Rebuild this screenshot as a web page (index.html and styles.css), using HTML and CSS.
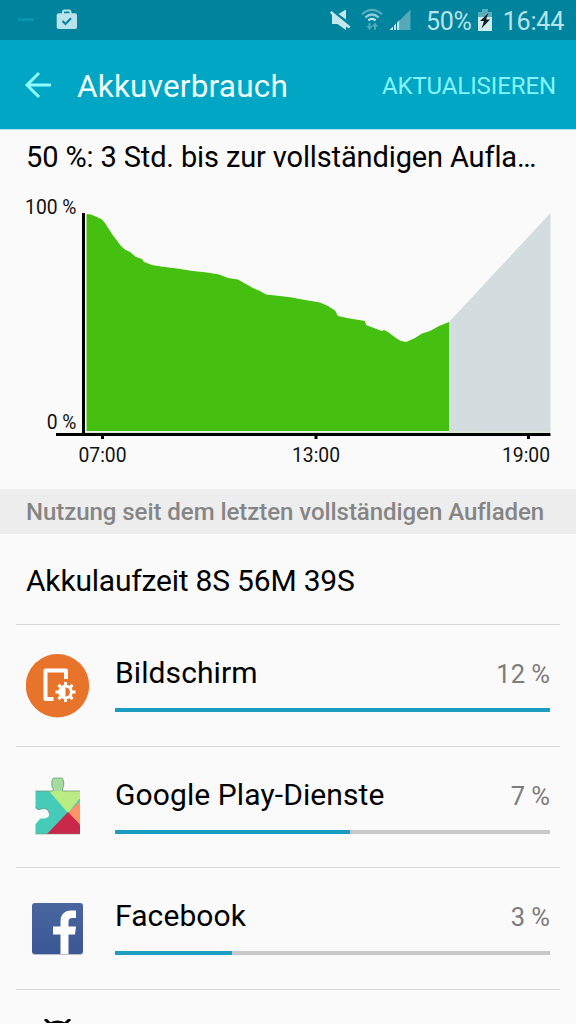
FILE: index.html
```html
<!DOCTYPE html>
<html lang="de">
<head>
    <meta charset="UTF-8">
    <meta name="viewport" content="width=device-width, initial-scale=1.0">
    <title>Akkuverbrauch</title>
    <link rel="stylesheet" href="styles.css">
</head>
<body>
    <!-- Statusleiste -->
    <div class="statusbar">
        <svg class="status-left" width="90" height="40" viewBox="0 0 90 40">
            <path d="M18 19.500h16" stroke="#0a9bb8" stroke-width="2"/>
            <path d="M63 14v-2q0-1.500 1.500-1.500h4.500q1.500 0 1.500 1.500v2" fill="none" stroke="#b9e3ea" stroke-width="2"/>
            <rect x="56.700" y="13.300" width="20.300" height="15.700" rx="2" fill="#b9e3ea"/>
            <path d="M62.500 21l3 3 5.500-5.700" fill="none" stroke="#00839c" stroke-width="2"/>
        </svg>
        <svg class="status-icons" width="86" height="40" viewBox="328 0 86 40">
            <!-- stumm -->
            <path d="M346 9.500V19.500L338.500 14z" fill="#c4e8ee"/>
            <path d="M330 12.500L331.500 11 350.500 26.500 349 28.500 346 26.500V30L337.500 24H332V15z" fill="#c4e8ee"/>
            <!-- WLAN -->
            <g fill="none" stroke-width="2.200">
                <path d="M362 14.300q10-9 20 0" stroke="#58adbd"/>
                <path d="M365.200 17.500q6.800-6 13.600 0" stroke="#8fcbd6"/>
                <path d="M368.300 20.300q3.700-3 7.400 0" stroke="#c4e8ee"/>
            </g>
            <path d="M369.500 30l-3.300-4h2.300v-3h2v3h2.300zM375 22.500l3.300 4h-2.300v3.200h-2v-3.200h-2.300z" fill="#4fa9ba"/>
            <!-- Signal -->
            <path d="M400 30V20l10.500-10.500V30z" fill="#55a9b9"/>
            <path d="M389.500 30l3.500-3.500V30zM394 30v-4.500l2-2V30zM397 30v-7.500l2.500-2.500v10z" fill="#c4e8ee"/>
        </svg>
        <span class="status-percent">50%</span>
        <svg class="status-battery" width="16" height="24" viewBox="0 0 16 24">
            <path d="M5 1h6v3h4v5H1V4h4z" fill="#5aadbc"/>
            <path d="M1 9h14v14H1z" fill="#d0edf2"/>
            <path d="M11.500 5L3 13h4l-2.500 7.500L13 11.500H9z" fill="#0c1c20"/>
        </svg>
        <span class="status-time">16:44</span>
    </div>

    <header class="header">
        <svg class="back" width="28" height="28" viewBox="0 0 28 28">
            <path d="M15 2L3 14l12 12M3 14h24" fill="none" stroke="#8ffcff" stroke-width="3"/>
        </svg>
        <h1 class="title">Akkuverbrauch</h1>
        <span class="refresh">AKTUALISIEREN</span>
    </header>

    <main>
        <p class="estimate">50 %: 3 Std. bis zur vollständigen Aufla…</p>

        <!-- Akkuverlauf -->
        <svg class="chart" width="576" height="306" viewBox="0 183 576 306">
            <path d="M449 322L550.500 213V432H449z" fill="#d3dcde"/>
            <path d="M84 432.500H550" stroke="#d5e9cc" stroke-width="2"/>
            <path class="level" d="M86.500 214L91 214.500 97 217 102 219.500 105 223 112 234 121 246 125 249.500 130 252 136 257 142 259 144 262 152 265 161 266.500 177 268.500 193 271 207 272.500 219 274.500 228 278 238 279.500 246 284 253 288 260 291 266 294.500 280 296 292 297.500 305 300 320 302.500 328 306 335 310.500 338 316 347 318 365 321 366 325 374 328 382 331 384 330 388 332 396 338 401 341 406 342 415 338 422 333.500 430 331 439 326 449 322V431H86.500z"/>
            <path d="M83.500 213V435M56 434.500H550.500M102.500 435v4M316 435v4M528.500 435v4" fill="none" stroke="#000" stroke-width="3"/>
            <text x="76.500" y="213.500" text-anchor="end">100 %</text>
            <text x="76.500" y="428.500" text-anchor="end">0 %</text>
            <text x="102.500" y="462" text-anchor="middle">07:00</text>
            <text x="316" y="462" text-anchor="middle">13:00</text>
            <text x="550" y="462" text-anchor="end">19:00</text>
        </svg>

        <h2 class="section">Nutzung seit dem letzten vollständigen Aufladen</h2>
        <p class="runtime">Akkulaufzeit 8S 56M 39S</p>

        <ul class="apps">
            <li class="app">
                <svg class="icon" width="64" height="64" viewBox="0 0 64 64">
                    <circle cx="31.500" cy="31.700" r="31.700" fill="#e8732a"/>
                    <path d="M27.500 45H19.500V16.500H40V25" fill="none" stroke="#fff" stroke-width="4" stroke-linejoin="round"/>
                    <path d="M39.500 28v20M29.500 38h20M32.400 30.900l14.200 14.200M46.600 30.900L32.400 45.100" stroke="#fff" stroke-width="3"/>
                    <circle cx="39.500" cy="38" r="7.300" fill="#fff"/>
                    <path d="M39.500 33.500a4.500 4.500 0 0 1 0 9z" fill="#e8732a"/>
                </svg>
                <div class="info">
                    <div class="line"><span class="name">Bildschirm</span><span class="value">12 %</span></div>
                    <div class="bar"><div class="fill" style="width: 100%"></div></div>
                </div>
            </li>
            <li class="app">
                <svg class="icon" width="64" height="64" viewBox="0 2 64 64">
                    <defs>
                        <clipPath id="puzzle">
                            <path d="M9.500 17H27V14.500C25 12 25.500 4 28 4H35.500C38 4 38.500 12 36.500 14.500V17H54V60H9.500V50C11 49 13 45 15 44.500 19 45 23 44 23.300 40 23 34 17 34 14 35.500 12 36 10 35 9.500 33z"/>
                        </clipPath>
                    </defs>
                    <g clip-path="url(#puzzle)">
                        <path d="M0 0h64v64H0z" fill="#47cbb9"/>
                        <path d="M23 17L42 39 60 17V0H23z" fill="#b9ed83"/>
                        <path d="M24 0h16v17H24z" fill="#a4dc9d"/>
                        <path d="M42 39L60 21V58z" fill="#ff9566"/>
                        <path d="M42 38L20 61H64z" fill="#c92848"/>
                    </g>
                    <path d="M9.500 17H27V14.500C25 12 25.500 4 28 4H35.500C38 4 38.500 12 36.500 14.500V17H54M9.500 33C10 35 12 36 14 35.500 17 34 23 34 23.300 40" fill="none" stroke="#6b8f72" stroke-opacity=".7"/>
                    <path d="M9.500 60H54" stroke="#7d7d72" stroke-opacity=".5"/>
                </svg>
                <div class="info">
                    <div class="line"><span class="name">Google Play-Dienste</span><span class="value">7 %</span></div>
                    <div class="bar"><div class="fill" style="width: 54%"></div></div>
                </div>
            </li>
            <li class="app">
                <svg class="icon" width="64" height="64" viewBox="0 0 64 64">
                    <defs>
                        <linearGradient id="fb" x2="0" y2="1">
                            <stop stop-color="#4a669f"/>
                            <stop offset="1" stop-color="#3a5794"/>
                        </linearGradient>
                    </defs>
                    <rect x="6" y="7" width="51" height="51" rx="3" fill="#b9bec8"/>
                    <rect x="6" y="6" width="51" height="51" rx="3" fill="url(#fb)"/>
                    <path d="M34.500 57V37.500H27v-8h7.500V25C34.500 17.500 38.500 13.500 45 13.500h5V21h-4q-3.500 0-3.500 4v4.500H50l-1 8h-6.500V57z" fill="#fff"/>
                </svg>
                <div class="info">
                    <div class="line"><span class="name">Facebook</span><span class="value">3 %</span></div>
                    <div class="bar"><div class="fill" style="width: 27%"></div></div>
                </div>
            </li>
            <li class="app cut">
                <svg class="icon" width="64" height="64" viewBox="0 0 64 64">
                    <path d="M19 0l6 6M44 0l-6 6" stroke="#000" stroke-width="3"/>
                    <path d="M18 11Q22 1.500 31.500 1.500T45 11z"/>
                </svg>
            </li>
        </ul>
    </main>
</body>
</html>
```
FILE: styles.css
```css
* {
    margin: 0;
    padding: 0;
    box-sizing: border-box;
}

body {
    width: 576px;
    height: 1024px;
    overflow: hidden;
    background: #fafafa;
    color: #000;
    font-family: Roboto, 'Liberation Sans', sans-serif;
    font-variant-ligatures: none;
}

svg {
    display: block;
    flex-shrink: 0;
}

/* Statusleiste */
.statusbar {
    display: flex;
    align-items: center;
    height: 40px;
    padding-right: 12px;
    background: #00839c;
    color: #b9e3ea;
    font-size: 25px;
    font-weight: 400;
}

.status-icons {
    margin-left: auto;
    margin-right: 12px;
}

.status-battery {
    margin: 0 10px 0 5px;
}

.status-percent,
.status-time {
    line-height: 40px;
    padding-top: 3px;
    letter-spacing: -0.2px;
}

/* Kopfzeile */
.header {
    display: flex;
    align-items: center;
    height: 90px;
    padding: 0 20px 0 24px;
    background: #00a6c3;
    border-bottom: 1px solid #a5e8fa;
}

.title {
    margin-left: 25px;
    color: #effdff;
    font-size: 31.5px;
    font-weight: 400;
    letter-spacing: 0.2px;
    padding-top: 3px;
}

.refresh {
    margin-left: auto;
    color: #84f4fa;
    font-size: 24px;
    font-weight: 400;
    letter-spacing: -0.1px;
    padding-top: 2px;
}

/* Verlauf */
.estimate {
    height: 53px;
    padding-left: 26px;
    font-size: 29px;
    letter-spacing: -0.13px;
    line-height: 54px;
    white-space: nowrap;
}

.chart text {
    font-size: 19.3px;
    fill: #111;
}

.level {
    fill: #45c010;
}

/* Abschnitt */
.section {
    height: 45px;
    padding-left: 26px;
    background: #ededed;
    color: #858585;
    font-size: 24px;
    font-weight: 500;
    letter-spacing: -0.05px;
    line-height: 47px;
    white-space: nowrap;
}

.runtime {
    height: 90px;
    padding-left: 26px;
    font-size: 30px;
    letter-spacing: -0.2px;
    line-height: 94px;
}

/* App-Liste */
.apps {
    margin: 0 16px;
    list-style: none;
}

.app {
    display: flex;
    height: 121.7px;
    padding: 29px 10px 0;
    border-top: 1px solid #d6d6d6;
}

/* letzte Zeile ist nur angeschnitten sichtbar */
.cut {
    height: 34px;
    overflow: hidden;
}

.info {
    flex: 1;
    margin-left: 25px;
}

.line {
    display: flex;
    justify-content: space-between;
    height: 54px;
    line-height: 38px;
}

.name {
    font-size: 30px;
    letter-spacing: 0.1px;
}

.value {
    color: #7c7c7c;
    font-size: 25.5px;
    padding-top: 1px;
}

.bar {
    height: 4px;
    background: #c8c8c8;
}

.fill {
    height: 100%;
    background: #1a9dbf;
}
```
